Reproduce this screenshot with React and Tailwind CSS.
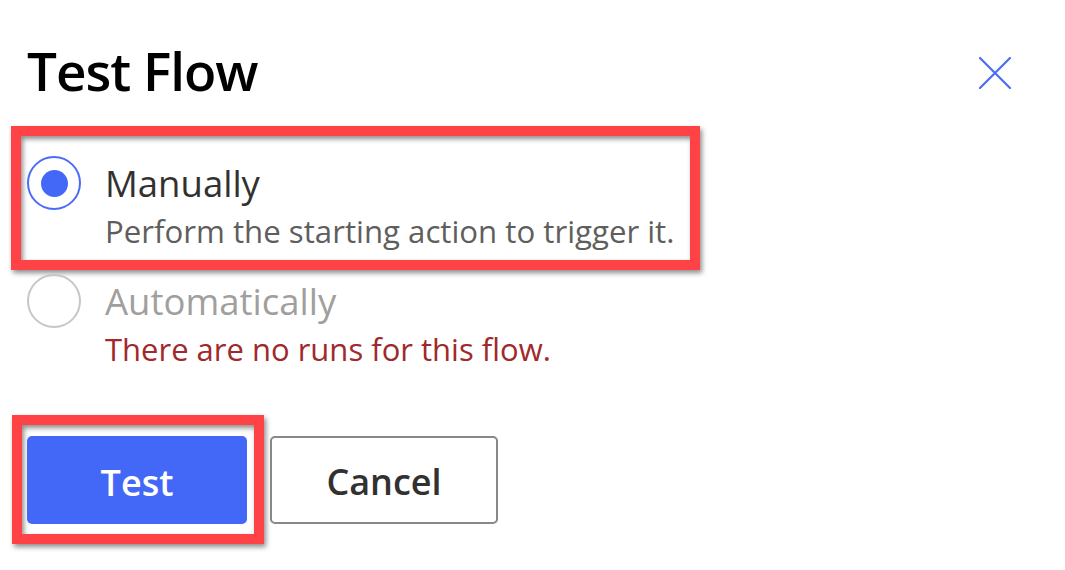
export default function App() {
  return (
    <div
      className="w-[1065px] h-[570px] bg-white overflow-hidden relative"
      style={{ fontFamily: '"Open Sans", "Noto Sans", sans-serif' }}
    >
      {/* Header */}
      <div className="flex items-start justify-between pt-[43px] pl-[27px] pr-[54px]">
        <h1 className="text-[53px] leading-[55px] font-semibold tracking-[-1px] text-black">Test Flow</h1>
        <button className="mt-[14px] w-[32px] h-[32px] flex items-center justify-center" aria-label="Close">
          <svg width="32" height="32" viewBox="0 0 32 32" fill="none">
            <path d="M1 1 L31 31 M31 1 L1 31" stroke="#4a6cf7" strokeWidth="2.2" strokeLinecap="round" />
          </svg>
        </button>
      </div>

      {/* Option 1 (highlighted) */}
      <div className="mt-[28px] ml-[11px] w-[689px] h-[144px] border-[10px] border-[#ff4245] pt-[20px] pl-[6px] shadow-[2px_3px_5px_rgba(0,0,0,0.45),inset_2px_3px_5px_rgba(0,0,0,0.45)]">
        <div className="flex items-start">
          <div className="w-[54px] h-[54px] rounded-full border-[2px] border-[#4a6cf7] flex items-center justify-center shrink-0">
            <div className="w-[27px] h-[27px] rounded-full bg-[#4368f8]" />
          </div>
          <div className="ml-[24px] mt-[5px]">
            <div className="text-[36.5px] leading-[45px] text-[#323130]">Manually</div>
            <div className="mt-[4px] text-[31.2px] leading-[42px] text-[#605e5c]">Perform the starting action to trigger it.</div>
          </div>
        </div>
      </div>

      {/* Option 2 (disabled) */}
      <div className="mt-[4px] ml-[27px] flex items-start">
        <div className="w-[54px] h-[54px] rounded-full border-[2px] border-[#c8c6c4] shrink-0" />
        <div className="ml-[24px] mt-[5px]">
          <div className="text-[36.5px] leading-[45px] text-[#a19f9d]">Automatically</div>
          <div className="mt-[4px] text-[31px] leading-[42px] text-[#a0292c]">There are no runs for this flow.</div>
        </div>
      </div>

      {/* Buttons */}
      <div className="mt-[45px] ml-[12px] flex items-center">
        <div className="w-[252px] h-[129px] border-[10px] border-[#ff4245] pt-[11px] pl-[5px] shadow-[2px_3px_5px_rgba(0,0,0,0.45),inset_2px_3px_5px_rgba(0,0,0,0.45)]">
          <button className="w-[220px] h-[88px] rounded-[5px] bg-[#4368f8] text-white text-[36px] font-semibold flex items-center justify-center pt-[5px]">
            Test
          </button>
        </div>
        <button className="ml-[6px] w-[228px] h-[88px] rounded-[5px] border-[2px] border-[#8a8886] bg-white text-[#323130] text-[36px] font-semibold flex items-center justify-center pt-[5px]">
          Cancel
        </button>
      </div>
    </div>
  );
}
